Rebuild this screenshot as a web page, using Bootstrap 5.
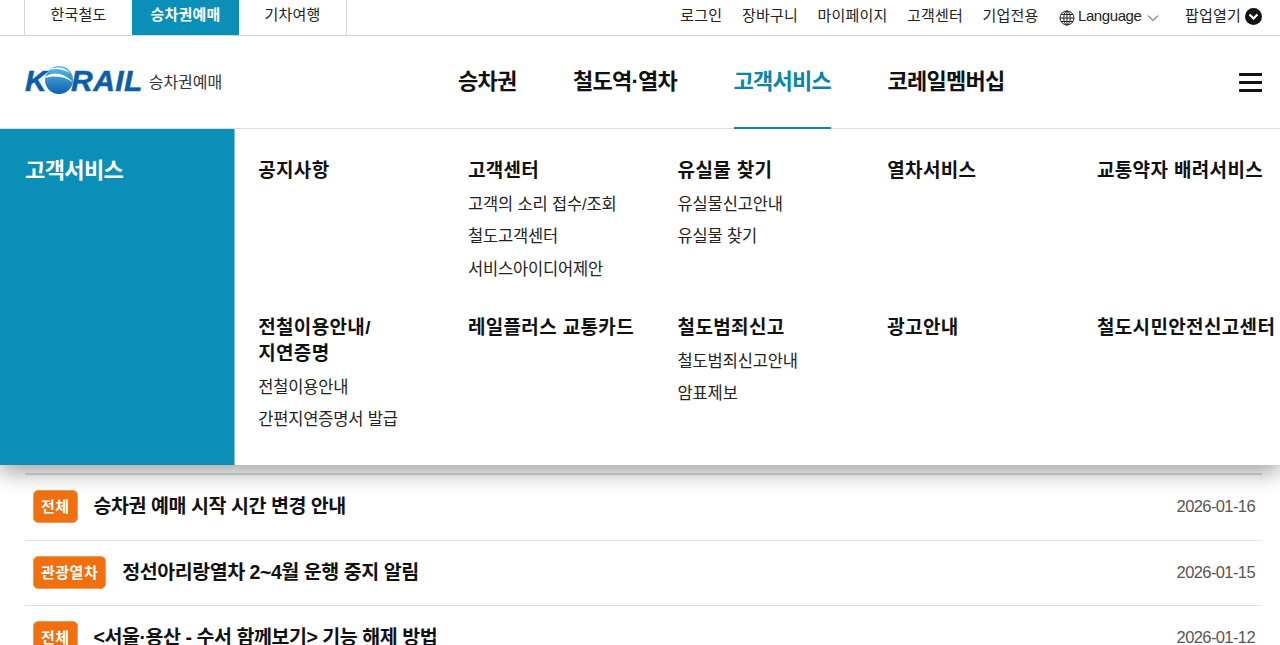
<!DOCTYPE html>
<html lang="ko">
<head>
  <meta charset="UTF-8">
  <meta name="viewport" content="width=device-width, initial-scale=1.0">
  <title>승차권예매 - 고객서비스</title>
  <link href="https://cdn.jsdelivr.net/npm/bootstrap@5.3.0/dist/css/bootstrap.min.css" rel="stylesheet">
  <style>
    html, body { height: 645px; overflow: hidden; }
    body {
      background: #fff;
      color: #111;
      font-family: "Liberation Sans", "Noto Sans CJK KR", sans-serif;
    }
    a { color: inherit; text-decoration: none; }

    .util-bar { height: 36px; border-bottom: 1px solid #d5d5d5; padding: 0 18px 0 24px; }
    .site-tabs { height: 35px; border-left: 1px solid #d5d5d5; border-right: 1px solid #d5d5d5; margin: 0; padding: 0; list-style: none; }
    .site-tabs a { display: block; width: 107px; height: 35px; line-height: 29px; text-align: center; font-size: 15px; letter-spacing: .2px; color: #222; }
    .site-tabs li:nth-child(2) a { background: #0a8fb9; color: #fff; font-weight: 700; }
    .util-links { font-size: 15px; letter-spacing: .2px; color: #222; gap: 19.5px; padding-bottom: 3px; }
    .lang-btn { letter-spacing: -.4px; margin-left: 1px; }
    .lang-globe { margin-right: 3px; }
    .lang-caret { margin-left: 6px; }
    .popup-btn { margin-left: 6px; gap: 4px; }

    .main-head { height: 93px; border-bottom: 1px solid #ddd; padding: 0 18px 0 25px; position: relative; }
    .logo-wrap { width: 433px; padding-bottom: 2px; }
    .logo-word { font-size: 30px; line-height: 1; font-weight: 700; font-style: italic; color: #0d5ea8; letter-spacing: .4px; -webkit-text-stroke: .5px #0d5ea8; }
    .logo-ball { margin: -2px -3px 0 -3px; }
    .logo-sub { font-size: 16px; color: #333; margin-left: 6px; padding-top: 3px; }
    .gnb { gap: 56.5px; margin: 0; padding: 0; list-style: none; }
    .gnb a { display: block; height: 93px; line-height: 92px; font-size: 22px; font-weight: 700; letter-spacing: -.75px; color: #111; }
    .gnb a.on { color: #0a85ae; border-bottom: 2px solid #0a85ae; }
    .menu-lines { width: 23px; gap: 5px; padding: 0; border: 0; background: none; }
    .menu-lines span { display: block; height: 3px; background: #111; }

    .mega { position: absolute; left: 0; right: 0; top: 129px; height: 336px; background: #fff; box-shadow: 0 8px 20px rgba(0, 0, 0, .35); clip-path: inset(0 0 -50px 0); z-index: 5; }
    .mega-side { width: 235px; flex: none; background: #0a8fb9; border-right: 1px solid #7fc2d8; color: #fff; font-size: 22px; font-weight: 700; letter-spacing: -.6px; padding: 27px 0 0 25px; line-height: 30px; }
    .mega-grid { flex: 1; display: grid; grid-template-columns: repeat(5, 209.7px); grid-template-rows: 157px 1fr; padding: 29px 0 0 23.2px; white-space: nowrap; }
    .mega-title { font-size: 19px; line-height: 26px; font-weight: 700; letter-spacing: .35px; color: #111; margin-bottom: 4px; }
    .mega-item { display: block; font-size: 16.5px; line-height: 32.3px; letter-spacing: -.15px; color: #222; }

    .notice-list { padding: 344px 18px 0 25px; }
    .notice-row { height: 65.5px; border-top: 1px solid #e2e2e2; padding: 0 7px 1px 8px; gap: 16px; }
    .notice-row:first-child { height: 66.5px; border-top: 2px solid #dcdcdc; }
    .notice-tag { background: #f0700f; border: 1px solid #f59a55; border-radius: 5px; color: #fff; font-size: 15px; font-weight: 700; line-height: 31px; padding: 0 7px; letter-spacing: .5px; }
    .notice-title { font-size: 19.5px; font-weight: 700; letter-spacing: -.45px; color: #111; }
    .notice-date { font-size: 16.5px; letter-spacing: -.6px; color: #555; }
  </style>
</head>
<body>
  <div class="util-bar d-flex justify-content-between align-items-start">
    <ul class="site-tabs d-flex">
      <li><a href="#">한국철도</a></li>
      <li><a href="#">승차권예매</a></li>
      <li><a href="#">기차여행</a></li>
    </ul>
    <div class="util-links d-flex align-items-center h-100">
      <a href="#">로그인</a>
      <a href="#">장바구니</a>
      <a href="#">마이페이지</a>
      <a href="#">고객센터</a>
      <a href="#">기업전용</a>
      <a href="#" class="lang-btn d-flex align-items-center">
        <svg width="16" height="16" viewBox="0 0 16 16" fill="none" stroke="#222" stroke-width="1" class="lang-globe mt-1">
          <circle cx="8" cy="8" r="7"/><ellipse cx="8" cy="8" rx="3.2" ry="7"/><path d="M8 1v14M1 8h14M2 4.500h12M2 11.500h12"/>
        </svg>
        Language
        <svg width="12" height="8" viewBox="0 0 12 8" fill="none" stroke="#333" class="lang-caret mt-1"><path d="M1 1.500 6 6.500l5-5"/></svg>
      </a>
      <a href="#" class="popup-btn d-flex align-items-center">
        팝업열기
        <svg width="17" height="17" viewBox="0 0 17 17"><circle cx="8.500" cy="8.500" r="8.500" fill="#111"/><path d="M4.500 6.500 8.500 10.500l4-4" fill="none" stroke="#fff" stroke-width="2.200"/></svg>
      </a>
    </div>
  </div>

  <header class="main-head d-flex align-items-center">
    <div class="logo-wrap d-flex align-items-center">
      <a href="#" class="logo-word d-flex align-items-center">
        <span>K</span>
        <svg width="30" height="30" viewBox="0 0 30 30" class="logo-ball">
          <defs><linearGradient id="ball" x1="0" y1="0" x2="0" y2="1"><stop offset="0" stop-color="#5dbde6"/><stop offset="1" stop-color="#0b62ad"/></linearGradient></defs>
          <circle cx="15" cy="15" r="14" fill="url(#ball)" stroke="none"/>
          <path d="M0 13C8 6 19 7 30 18 21 11 11 10 0 13Z" fill="#fff" stroke="none"/>
          <path d="M5 5c7-4 15-3 21 3-7-4-14-5-21-3Z" fill="#fff" stroke="none"/>
        </svg>
        <span>RAIL</span>
      </a>
      <span class="logo-sub">승차권예매</span>
    </div>
    <ul class="gnb d-flex flex-grow-1">
      <li><a href="#">승차권</a></li>
      <li><a href="#">철도역·열차</a></li>
      <li><a href="#" class="on">고객서비스</a></li>
      <li><a href="#">코레일멤버십</a></li>
    </ul>
    <button type="button" class="menu-lines d-flex flex-column" aria-label="전체메뉴">
      <span class="w-100"></span><span class="w-100"></span><span class="w-100"></span>
    </button>
  </header>

  <nav class="mega d-flex">
    <div class="mega-side">고객서비스</div>
    <div class="mega-grid">
      <div><div class="mega-title">공지사항</div></div>
      <div>
        <div class="mega-title">고객센터</div>
        <a href="#" class="mega-item">고객의 소리 접수/조회</a>
        <a href="#" class="mega-item">철도고객센터</a>
        <a href="#" class="mega-item">서비스아이디어제안</a>
      </div>
      <div>
        <div class="mega-title">유실물 찾기</div>
        <a href="#" class="mega-item">유실물신고안내</a>
        <a href="#" class="mega-item">유실물 찾기</a>
      </div>
      <div><div class="mega-title">열차서비스</div></div>
      <div><div class="mega-title">교통약자 배려서비스</div></div>
      <div>
        <div class="mega-title">전철이용안내/<br>지연증명</div>
        <a href="#" class="mega-item">전철이용안내</a>
        <a href="#" class="mega-item">간편지연증명서 발급</a>
      </div>
      <div><div class="mega-title">레일플러스 교통카드</div></div>
      <div>
        <div class="mega-title">철도범죄신고</div>
        <a href="#" class="mega-item">철도범죄신고안내</a>
        <a href="#" class="mega-item">암표제보</a>
      </div>
      <div><div class="mega-title">광고안내</div></div>
      <div><div class="mega-title">철도시민안전신고센터</div></div>
    </div>
  </nav>

  <main class="notice-list">
    <a href="#" class="notice-row d-flex align-items-center">
      <span class="notice-tag">전체</span>
      <span class="notice-title flex-grow-1">승차권 예매 시작 시간 변경 안내</span>
      <span class="notice-date">2026-01-16</span>
    </a>
    <a href="#" class="notice-row d-flex align-items-center">
      <span class="notice-tag">관광열차</span>
      <span class="notice-title flex-grow-1">정선아리랑열차 2~4월 운행 중지 알림</span>
      <span class="notice-date">2026-01-15</span>
    </a>
    <a href="#" class="notice-row d-flex align-items-center">
      <span class="notice-tag">전체</span>
      <span class="notice-title flex-grow-1">&lt;서울·용산 - 수서 함께보기&gt; 기능 해제 방법</span>
      <span class="notice-date">2026-01-12</span>
    </a>
  </main>

  <script src="https://cdn.jsdelivr.net/npm/bootstrap@5.3.0/dist/js/bootstrap.bundle.min.js"></script>
</body>
</html>
